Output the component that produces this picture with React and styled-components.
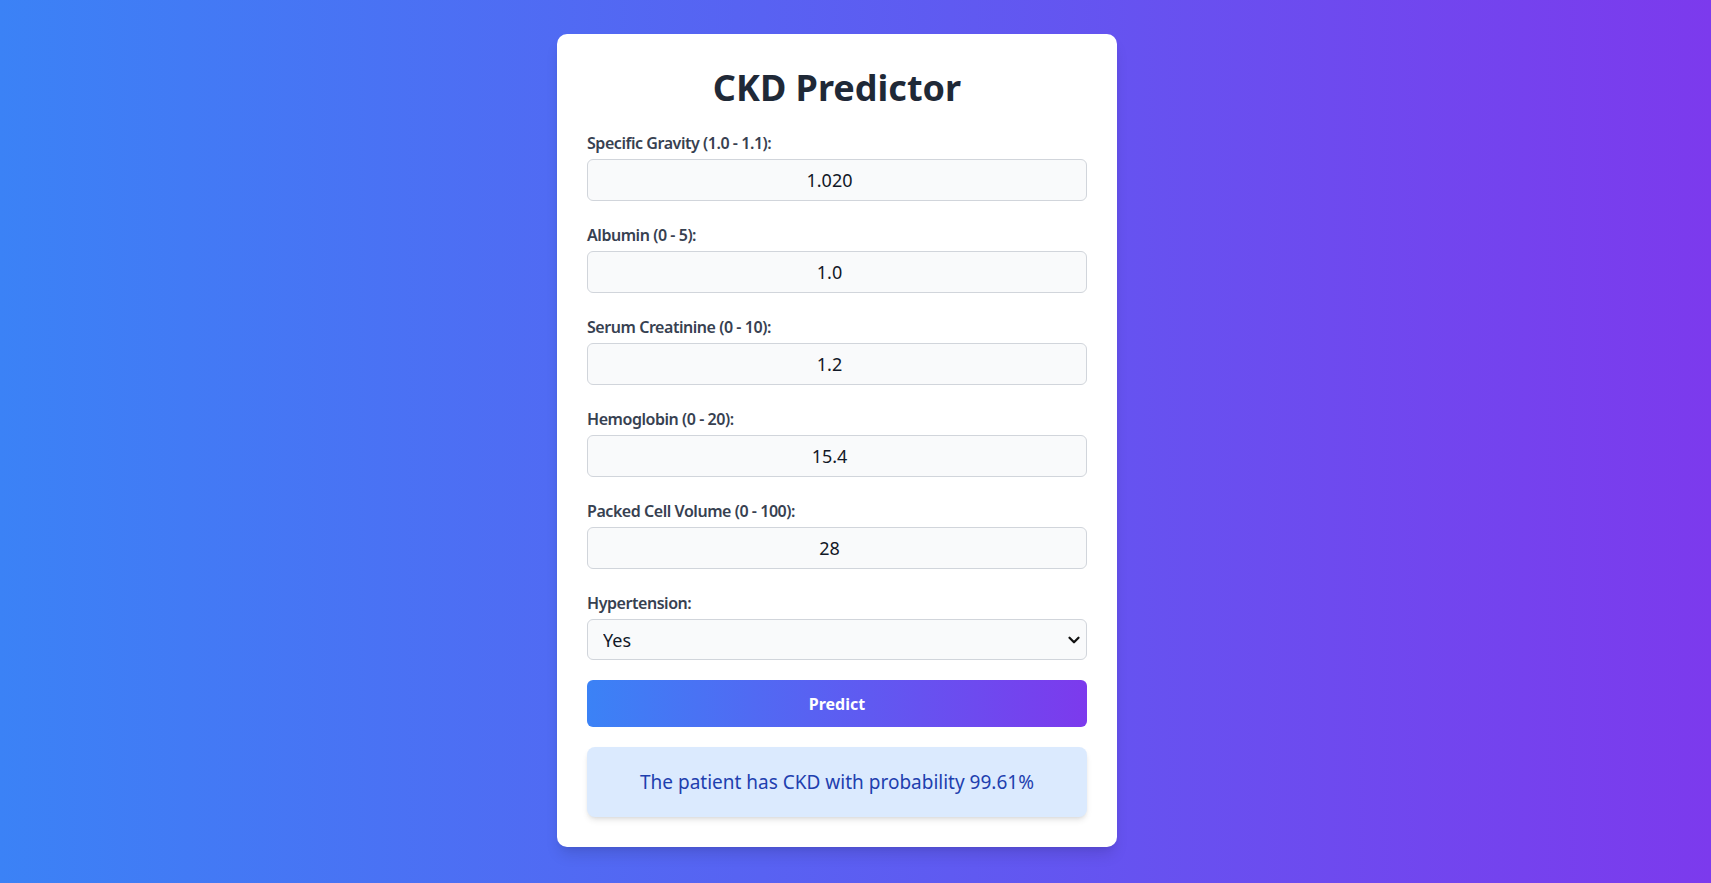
import React, { useState } from "react";
import styled, { createGlobalStyle } from "styled-components";
import { ChevronDown } from "lucide-react";

const Global = createGlobalStyle`
  * { box-sizing: border-box; }
  html, body { margin: 0; padding: 0; }
  body {
    font-family: "Noto Sans", "Open Sans", sans-serif;
    background: linear-gradient(to right, #3b82f6, #7c3aed);
    min-height: 100vh;
  }
`;

const Page = styled.div`
  min-height: 100vh;
  display: flex;
  align-items: flex-start;
  justify-content: center;
  padding: 34px 37px 0 0;
`;

const Card = styled.div`
  width: 560px;
  background: #ffffff;
  border-radius: 10px;
  padding: 30px;
  box-shadow: 0 10px 15px -3px rgba(0, 0, 0, 0.12), 0 4px 6px -4px rgba(0, 0, 0, 0.1);
`;

const Title = styled.h1`
  margin: 0 0 19px;
  font-size: 36px;
  line-height: 48px;
  font-weight: 700;
  color: #1f2937;
  text-align: center;
`;

const Group = styled.div`
  display: flex;
  flex-direction: column;
  margin-bottom: ${(p) => (p.$last ? "20px" : "22px")};
`;

const Label = styled.label`
  font-size: 16px;
  line-height: 24px;
  font-weight: 600;
  letter-spacing: -0.45px;
  color: #374151;
  margin-bottom: 4px;
`;

const Input = styled.input`
  height: 42px;
  width: 100%;
  border: 1px solid #d1d5db;
  border-radius: 6px;
  background: #f9fafb;
  font-family: inherit;
  font-size: 18px;
  color: #111827;
  text-align: center;
  padding: 0 12px;
  outline: none;
`;

const SelectWrap = styled.div`
  position: relative;
`;

const Select = styled.select`
  appearance: none;
  height: 41px;
  width: 100%;
  border: 1px solid #d1d5db;
  border-radius: 6px;
  background: #f9fafb;
  font-family: inherit;
  font-size: 18px;
  color: #111827;
  padding: 0 36px 0 15px;
  outline: none;
`;

const Arrow = styled.span`
  position: absolute;
  right: 4px;
  top: 50%;
  transform: translateY(-50%);
  display: flex;
  pointer-events: none;
  color: #111;
`;

const Button = styled.button`
  display: block;
  width: 100%;
  height: 47px;
  border: none;
  border-radius: 6px;
  background: linear-gradient(to right, #3b82f6, #7c3aed);
  color: #ffffff;
  font-family: inherit;
  font-size: 16px;
  font-weight: 700;
  cursor: pointer;
  margin-bottom: 20px;
`;

const Result = styled.div`
  background: #dbeafe;
  color: #1e40af;
  border-radius: 8px;
  height: 70px;
  display: flex;
  align-items: center;
  justify-content: center;
  font-size: 19px;
  box-shadow: 0 4px 6px -1px rgba(0, 0, 0, 0.1), 0 2px 4px -2px rgba(0, 0, 0, 0.1);
`;

const fields = [
  { label: "Specific Gravity (1.0 - 1.1):", value: "1.020", step: "0.005" },
  { label: "Albumin (0 - 5):", value: "1.0", step: "0.1" },
  { label: "Serum Creatinine (0 - 10):", value: "1.2", step: "0.1" },
  { label: "Hemoglobin (0 - 20):", value: "15.4", step: "0.1" },
  { label: "Packed Cell Volume (0 - 100):", value: "28", step: "1" },
];

export default function App() {
  const [vals, setVals] = useState(fields.map((f) => f.value));
  const [htn, setHtn] = useState("yes");
  return (
    <>
      <Global />
      <Page>
        <Card>
          <Title>CKD Predictor</Title>
          {fields.map((f, i) => (
            <Group key={f.label}>
              <Label>{f.label}</Label>
              <Input
                type="number"
                step={f.step}
                value={vals[i]}
                onChange={(e) => {
                  const n = [...vals];
                  n[i] = e.target.value;
                  setVals(n);
                }}
              />
            </Group>
          ))}
          <Group $last>
            <Label>Hypertension:</Label>
            <SelectWrap>
              <Select value={htn} onChange={(e) => setHtn(e.target.value)}>
                <option value="yes">Yes</option>
                <option value="no">No</option>
              </Select>
              <Arrow>
                <ChevronDown size={18} strokeWidth={3} />
              </Arrow>
            </SelectWrap>
          </Group>
          <Button>Predict</Button>
          <Result>The patient has CKD with probability 99.61%</Result>
        </Card>
      </Page>
    </>
  );
}
